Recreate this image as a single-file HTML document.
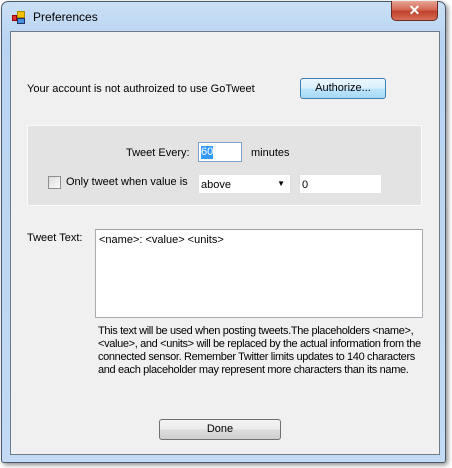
<!DOCTYPE html>
<html><head><style>
*{margin:0;padding:0;box-sizing:border-box}
body{width:452px;height:468px;background:#fff;position:relative;overflow:hidden;font-family:"Liberation Sans",sans-serif;font-size:11px;color:#000}
.win{position:absolute;left:1px;top:1px;width:445px;height:462px;border:1px solid #4a5a6a;border-radius:7px 7px 3px 3px;background:linear-gradient(#c9dff5,#b9d4f2 40px,#c2daf3);box-shadow:2px 2px 5px rgba(0,0,0,.45)}
.client{position:absolute;left:10px;top:31px;width:430px;height:424px;border:1px solid #6e7c8a;background:#f0f0f0}
.a{position:absolute;white-space:nowrap}
.title{left:33px;top:10px;font-size:12px}
.close{left:391px;top:1px;width:47px;height:20px;border:1px solid #6b2a22;border-top:none;border-radius:0 0 5px 5px;background:linear-gradient(#e8a493,#d36a56 45%,#c0412d 55%,#d66e55);color:#fff;text-align:center;font-weight:bold;font-size:14px;line-height:18px}
.btn{border:1px solid #707070;border-radius:3px;background:linear-gradient(#f2f2f2,#ebebeb 50%,#dddddd 50%,#cfcfcf);text-align:center;line-height:19px}
.inp{background:#fff;border:1px solid #abadb3;border-top-color:#a0a0a0}
</style></head><body>
<div class="win"></div>
<div class="a" style="left:12px;top:11px;width:13px;height:13px">
<div class="a" style="left:0;top:4px;width:5px;height:6px;background:#d33;border:1px solid #900"></div>
<div class="a" style="left:5px;top:0;width:8px;height:7px;background:#f5c000;border:1px solid #a80"></div>
<div class="a" style="left:5px;top:7px;width:8px;height:6px;background:#4a8fe0;border:1px solid #236"></div>
</div>
<div class="a title">Preferences</div>
<div class="a close">✕</div>
<div class="client"></div>
<div class="a" style="left:27px;top:83px">Your account is not authroized to use GoTweet</div>
<div class="a btn" style="left:300px;top:78px;width:86px;height:21px;border-color:#3c7fb1;background:linear-gradient(#eaf6fd,#d9f0fc 50%,#bee6fd 50%,#a7d9f5)">Authorize...</div>
<div class="a" style="left:27px;top:125px;width:395px;height:81px;background:#e3e3e3;border:1px solid #fafafa"></div>
<div class="a" style="left:126px;top:147px">Tweet Every:</div>
<div class="a inp" style="left:198px;top:142px;width:44px;height:20px;border-color:#7da2ce"><span style="position:absolute;left:2px;top:3px;background:#3399ff;color:#fff;line-height:13px">60</span></div>
<div class="a" style="left:251px;top:147px">minutes</div>
<div class="a" style="left:48px;top:176px;width:13px;height:13px;border:1px solid #8f8f8f;background:linear-gradient(135deg,#dcdcdc,#fbfbfb)"></div>
<div class="a" style="left:66px;top:176px">Only tweet when value is</div>
<div class="a inp" style="left:198px;top:174px;width:93px;height:20px;border-color:#e0e0e0"><span style="position:absolute;left:2px;top:4px">above</span><span style="position:absolute;right:5px;top:4px;font-size:8px">▼</span></div>
<div class="a inp" style="left:299px;top:174px;width:83px;height:20px;border-color:#e0e0e0"><span style="position:absolute;left:2px;top:4px">0</span></div>
<div class="a" style="left:27px;top:232px">Tweet Text:</div>
<div class="a inp" style="left:95px;top:229px;width:328px;height:89px"><span style="position:absolute;left:3px;top:4px">&lt;name&gt;: &lt;value&gt; &lt;units&gt;</span></div>
<div class="a" style="left:98px;top:325px;line-height:13px;letter-spacing:-0.35px">This text will be used when posting tweets.The placeholders &lt;name&gt;,<br>&lt;value&gt;, and &lt;units&gt; will be replaced by the actual information from the<br>connected sensor. Remember Twitter limits updates to 140 characters<br>and each placeholder may represent more characters than its name.</div>
<div class="a btn" style="left:159px;top:419px;width:122px;height:21px">Done</div>
</body></html>
